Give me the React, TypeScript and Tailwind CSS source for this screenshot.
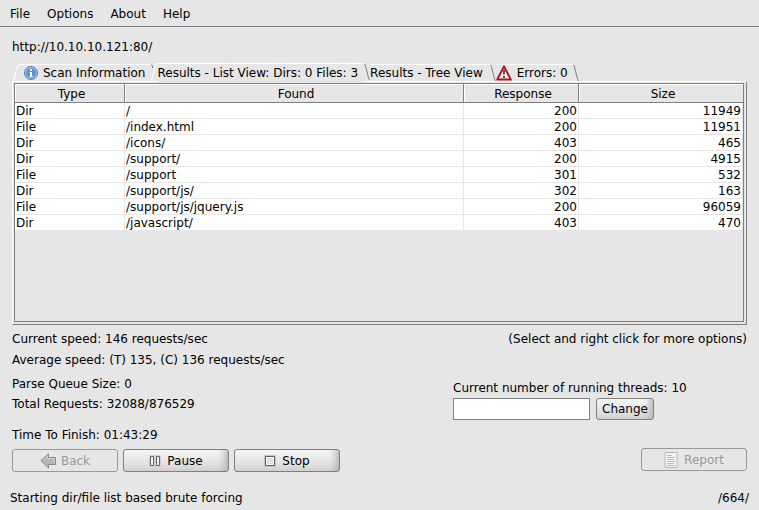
import type { ReactNode } from "react";

const rows = [
  ["Dir", "/", "200", "11949"],
  ["File", "/index.html", "200", "11951"],
  ["Dir", "/icons/", "403", "465"],
  ["Dir", "/support/", "200", "4915"],
  ["File", "/support", "301", "532"],
  ["Dir", "/support/js/", "302", "163"],
  ["File", "/support/js/jquery.js", "200", "96059"],
  ["Dir", "/javascript/", "403", "470"],
];

function LeftEdge({ notch = false }: { notch?: boolean }) {
  return (
    <svg width="6" height="17" viewBox="0 0 6 17" fill="none" className="shrink-0">
      {notch && <path d="M.5 1.500 1.500 3V5" stroke="#808080" />}
      <path d="M6 .5H5.5L4.5 2 3.5 6 2.5 10 1.5 14 .5 17" stroke="#fff" />
    </svg>
  );
}

function RightEdge() {
  return (
    <svg width="6" height="17" viewBox="0 0 6 17" fill="none" className="shrink-0">
      <path d="M.5 1 1.5 3 2.5 7 3.5 11 4.5 15 5.5 17" stroke="#808080" />
    </svg>
  );
}

function InfoIcon() {
  return (
    <svg width="14" height="14" viewBox="0 0 14 14" className="shrink-0">
      <circle cx="7" cy="7" r="6.5" fill="#8fb2dc" stroke="#4f7db8" />
      <circle cx="7" cy="7" r="5.3" fill="#5e90cb" stroke="#a9c6e8" strokeWidth=".8" />
      <path d="M6 3h2v2H6zM5.5 6H8v4h.7v1H5.3v-1H6V7h-.5z" fill="#fff" />
    </svg>
  );
}

function WarningIcon() {
  return (
    <svg width="16" height="16" viewBox="0 0 16 16" className="shrink-0">
      <path d="M8 1.4 14.8 14.6H1.2z" fill="#f6f6f6" stroke="#b01217" strokeWidth="2" strokeLinejoin="round" />
      <path d="M7 5h2v2l-.4 3H7.4L7 7zM7 11h2v2H7z" fill="#4a4a4a" />
    </svg>
  );
}

function BackIcon() {
  return (
    <svg width="16" height="16" viewBox="0 0 16 16" className="shrink-0">
      <path d="M.8 7.500 8.5.9V4.500H15.500V11.500H8.500V15z" fill="#b5b5b5" stroke="#8a8a8a" />
      <path d="M2.500 7.500 7.500 3.500V5.500H14.500V10.500" fill="none" stroke="#d0d0d0" />
    </svg>
  );
}

function PauseIcon() {
  return (
    <svg width="12" height="12" viewBox="0 0 12 12" className="shrink-0">
      <path d="M.500.500H5.500V11.500H.500zM6.500.500H11.500V11.500H6.500z" fill="none" stroke="#d0d0d0" />
      <path d="M1.500 1.500h3v9h-3zM7.500 1.500h3v9h-3z" fill="#f2f2f0" stroke="#656763" />
    </svg>
  );
}

function StopIcon() {
  return (
    <svg width="12" height="12" viewBox="0 0 12 12" className="shrink-0">
      <path d="M.500.500h11v11H.500z" fill="none" stroke="#c4c6c2" />
      <path d="M1.500 1.500h9v9h-9z" fill="#fff" stroke="#5b5e59" />
      <path d="M3 3h6v6H3z" fill="#dfe2dc" />
    </svg>
  );
}

function ReportIcon() {
  return (
    <svg width="14" height="16" viewBox="0 0 14 16" className="shrink-0">
      <path d="M1 .500h12v15H1z" fill="#f2f2f2" stroke="#b8b8b8" />
      <path d="M3 3.500h5M3 5.500h8M3 7.500h7M3 9.500h8M3 11.500h7M3 13.500h8" stroke="#bcbcbc" />
    </svg>
  );
}

function ActionButton({ children, disabled = false }: { children: ReactNode; disabled?: boolean }) {
  return (
    <button
      disabled={disabled}
      className="flex h-[23px] w-[106px] items-center justify-center gap-1.5 rounded-[3px] border border-[#808080] bg-linear-to-b from-[#f6f6f6] to-[#d6d6d6] shadow-[inset_-8px_-2px_8px_-6px_#a8a8a8] disabled:border-[#999] disabled:bg-none disabled:text-[#999] disabled:shadow-none"
    >
      {children}
    </button>
  );
}

export default function App() {
  return (
    <div className="flex min-h-screen flex-col bg-[#e6e6e6] font-['DejaVu_Sans',sans-serif] text-[12px] leading-4 text-black">
      <nav className="flex h-[27px] shrink-0 items-center gap-[17px] border-b border-[#808080] px-2.5 pt-0.5">
        <button>File</button>
        <button>Options</button>
        <button>About</button>
        <button>Help</button>
      </nav>

      <main className="flex flex-1 flex-col px-3 pt-3">
        <p>http://10.10.10.121:80/</p>

        <div role="tablist" className="mt-2 flex h-[18px] items-end whitespace-nowrap pl-px">
          <LeftEdge />
          <button role="tab" aria-selected="false" className="flex h-[17px] items-center gap-[5px] border-t border-white pr-1.5 pl-[5px]">
            <InfoIcon />
            Scan Information
          </button>
          <div className="z-10 -mb-px flex h-[19px] items-start">
            <LeftEdge notch />
            <button role="tab" aria-selected="true" className="h-[19px] border-t border-white bg-[#e6e6e6] pr-1.5">
              Results - List View: Dirs: 0 Files: 3
            </button>
            <RightEdge />
          </div>
          <button role="tab" aria-selected="false" className="h-[17px] border-t border-white pr-[7px]">
            Results - Tree View
          </button>
          <RightEdge />
          <button role="tab" aria-selected="false" className="flex h-[17px] items-center gap-[5px] border-t border-white pr-[5px]">
            <WarningIcon />
            Errors: 0
          </button>
          <RightEdge />
        </div>

        <div className="flex flex-1 flex-col border-t border-r border-b border-l border-t-white border-r-[#808080] border-b-[#808080] border-l-white pt-px pr-0.5 pb-0.5 pl-px">
          <div className="flex-1 border border-[#808080]">
            <table className="w-full table-fixed border-separate border-spacing-0">
              <colgroup>
                <col className="w-[110px]" />
                <col />
                <col className="w-[115px]" />
                <col className="w-[164px]" />
              </colgroup>
              <thead>
                <tr className="h-[19px]">
                  {["Type", "Found", "Response", "Size"].map((name) => (
                    <th
                      key={name}
                      className="border-r border-b border-[#808080] p-0 pt-0.5 pl-1 text-center font-normal shadow-[inset_1px_1px_0_#fff] last:border-r-0"
                    >
                      {name}
                    </th>
                  ))}
                </tr>
              </thead>
              <tbody>
                {rows.map((row) => (
                  <tr key={row[1]} className="h-4 bg-white leading-[13px]">
                    {row.map((cell, i) => (
                      <td
                        key={i}
                        className="border-r border-b border-[#e6e6e6] px-px pt-0.5 pb-0 nth-3:text-right nth-4:text-right"
                      >
                        {cell}
                      </td>
                    ))}
                  </tr>
                ))}
              </tbody>
            </table>
          </div>
        </div>

        <div className="flex justify-between pt-1.5">
          <section className="flex flex-col">
            <p>Current speed: 146 requests/sec</p>
            <p className="mt-[5px]">Average speed: (T) 135, (C) 136 requests/sec</p>
            <p className="mt-2">Parse Queue Size: 0</p>
            <p className="mt-1">Total Requests: 32088/876529</p>
            <p className="mt-[15px]">Time To Finish: 01:43:29</p>
            <div className="mt-1.5 flex gap-[5px]">
              <ActionButton disabled>
                <span className="flex items-center gap-[5px]">
                  <BackIcon />
                  Back
                </span>
              </ActionButton>
              <ActionButton>
                <PauseIcon />
                Pause
              </ActionButton>
              <ActionButton>
                <StopIcon />
                Stop
              </ActionButton>
            </div>
          </section>

          <section className="flex w-[294px] flex-col">
            <p className="text-right">(Select and right click for more options)</p>
            <label htmlFor="threads" className="mt-[33px]">
              Current number of running threads: 10
            </label>
            <div className="mt-0.5 flex gap-1.5">
              <input id="threads" type="text" className="h-[22px] w-[137px] border border-[#808080] bg-white px-1 outline-none" />
              <button className="h-[22px] w-[58px] rounded-[3px] border border-[#808080] bg-linear-to-b from-[#f6f6f6] to-[#d6d6d6] shadow-[inset_-8px_-2px_8px_-6px_#a8a8a8]">
                Change
              </button>
            </div>
            <div className="mt-7 flex justify-end">
              <ActionButton disabled>
                <ReportIcon />
                Report
              </ActionButton>
            </div>
          </section>
        </div>
      </main>

      <footer className="flex justify-between px-2.5 pt-[18px] pb-1">
        <span>Starting dir/file list based brute forcing</span>
        <span>/664/</span>
      </footer>
    </div>
  );
}
